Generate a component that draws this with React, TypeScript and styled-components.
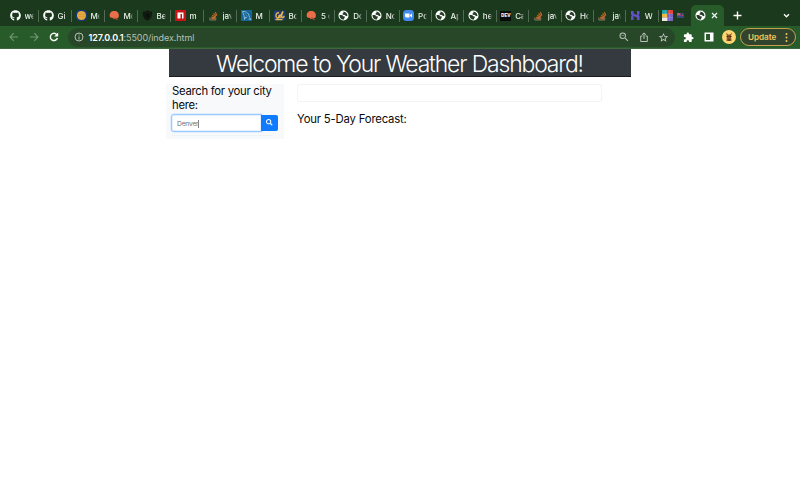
import React from "react";
import styled, { createGlobalStyle } from "styled-components";
import { FaGithub, FaSearch } from "react-icons/fa";
import { MdExtension, MdStarBorder, MdZoomOut } from "react-icons/md";

const GlobalStyle = createGlobalStyle`
  * { box-sizing: border-box; }
  html, body, #root { height: 100%; }
  body { margin: 0; background: #fff; overflow: hidden; font-family: Inter, "Liberation Sans", sans-serif; color: #212529; }
  svg { display: block; flex: none; }
`;

const Browser = styled.div`
  height: 500px;
  width: 800px;
  display: flex;
  flex-direction: column;
`;

const TabStrip = styled.div`
  height: 26px;
  flex: none;
  display: flex;
  align-items: flex-end;
  background: #1b391c;
  padding-left: 6px;
`;

const Tab = styled.div<{ $wide: boolean }>`
  width: ${({ $wide }) => ($wide ? "33px" : "32.4px")};
  flex: none;
  height: 21px;
  display: flex;
  align-items: center;
  padding-left: 3.5px;
  gap: 4px;
`;

const TabIcon = styled.span`
  width: 11px;
  height: 11px;
  flex: none;
  display: flex;
  align-items: center;
  justify-content: center;
`;

const TabTitle = styled.span`
  width: 10px;
  overflow: hidden;
  white-space: nowrap;
  font-size: 8px;
  line-height: 12px;
  font-weight: 500;
  color: #e9efe9;
  mask-image: linear-gradient(90deg, #000 70%, transparent);
`;

const Divider = styled.i`
  width: 1px;
  height: 12px;
  margin-left: auto;
  background: #536b54;
`;

const ActiveTab = styled.div`
  width: 33px;
  height: 21px;
  display: flex;
  align-items: center;
  padding-left: 4.5px;
  gap: 3.5px;
  margin-left: -0.4px;
  background: #285b2a;
  border-radius: 5px 5px 0 0;
`;

const StripEnd = styled.div`
  flex: 1;
  height: 21px;
  display: flex;
  align-items: center;
  justify-content: space-between;
  padding: 0 9px 0 8px;
`;

const Toolbar = styled.div`
  height: 23px;
  flex: none;
  display: flex;
  align-items: center;
  background: #285b2a;
  border-bottom: 1px solid #3e673e;
  padding: 0 4px 0 8px;
`;

const NavButtons = styled.div`
  width: 60px;
  display: flex;
  align-items: center;
  gap: 8px;
`;

const AddressBar = styled.div`
  width: 607px;
  height: 19px;
  flex: none;
  border-radius: 10px;
  background: #284729;
  display: flex;
  align-items: center;
  padding: 0 5px 0 6px;
`;

const Address = styled.span`
  margin-left: 4.5px;
  flex: 1;
  font-size: 9px;
  letter-spacing: -0.08px;
  color: #b4c1b4;
  b { color: #fff; font-weight: 600; letter-spacing: -0.1px; }
`;

const AddressActions = styled.div`
  display: flex;
  align-items: center;
  gap: 9px;
  margin-right: 1px;
`;

const ToolbarActions = styled.div`
  flex: 1;
  display: flex;
  align-items: center;
  padding-left: 8px;
`;

const PanelButton = styled.span`
  margin-left: 10px;
`;

const Avatar = styled.span`
  margin-left: 8px;
`;

const UpdateButton = styled.span`
  margin-left: auto;
  width: 56px;
  height: 18px;
  border: 1.5px solid #c5a14b;
  border-radius: 9px;
  background: #31432c;
  display: flex;
  align-items: center;
  justify-content: space-between;
  padding: 0 7px 0 7px;
  color: #f0c75b;
  font-size: 8.1px;
  font-weight: 600;
`;

const Page = styled.main`
  flex: 1;
  width: 462px;
  margin-left: 169px;
`;

const Banner = styled.h1`
  margin: 0;
  height: 28px;
  background: #343a40;
  border-bottom: 1px solid #171b20;
  color: #fff;
  font-size: 22.9px;
  line-height: 30px;
  font-weight: 300;
  letter-spacing: -1.13px;
  padding-right: 1px;
  text-align: center;
  white-space: nowrap;
`;

const Columns = styled.div`
  display: flex;
  align-items: flex-start;
  margin: 7px 0 0 -3px;
`;

const SearchPanel = styled.section`
  width: 118px;
  height: 55px;
  background: #f8f9fa;
  padding: 0 6px;
`;

const Heading = styled.h2<{ $tight?: boolean }>`
  margin: 0;
  font-size: 11.3px;
  line-height: 14px;
  font-weight: 400;
  color: #08090a;
  letter-spacing: ${({ $tight }) => ($tight ? "-0.28px" : "-0.17px")};
  white-space: nowrap;
`;

const SearchForm = styled.div`
  display: flex;
  align-items: center;
  margin: 2px 0 0 -1px;
`;

const SearchField = styled.div`
  width: 91px;
  height: 18px;
  background: #fff;
  border: 1px solid #9dcaff;
  box-shadow: inset 0 0 0 0.5px #c7e1ff, 0 0 0 0.5px #c7e1ff;
  border-radius: 3px 0 0 3px;
  padding: 1px 0 0 5px;
  display: flex;
  align-items: center;
  color: #6b7177;
  font-size: 6.7px;
  letter-spacing: -0.2px;
`;

const Caret = styled.i`
  width: 1px;
  height: 8px;
  background: #858a90;
`;

const SearchButton = styled.button`
  width: 17px;
  height: 16px;
  border: 0;
  padding: 0 0 1px;
  margin-left: -0.5px;
  border-radius: 0 2px 2px 0;
  background: #107bff;
  color: #fff;
  display: flex;
  align-items: center;
  justify-content: center;
`;

const ResultDivider = styled.i`
  display: block;
  width: 101px;
  height: 1px;
  margin-top: 3px;
  background: #f1f2f3;
`;

const Results = styled.section`
  margin-left: 13px;
  width: 305px;
`;

const CurrentWeather = styled.div`
  height: 18px;
  margin-bottom: 10px;
  border: 1px solid #f4f4f4;
  border-radius: 2px;
`;

const Globe = () => (
  <svg width="11" height="11" viewBox="0 0 22 22">
    <circle cx="11" cy="11" r="10" fill="#fff" />
    <path d="M3 10c3-.5 7 0 7.500 2.500l3 .5c1 2-1 2-1 4l-1.500 2.500C6 19 2.500 15 3 10Z" fill="#243e25" />
    <path d="M10.500 3c5 .5 8 3.500 8.500 8.500l-3 1-2-2.500-4-.5c-1.500-1-1.500-2.500 0-3s1-1 .5-3.500Z" fill="#243e25" />
  </svg>
);
const Github = () => <FaGithub size={11} color="#fff" />;
const Mozilla = () => (
  <svg width="11" height="11" viewBox="0 0 22 22"><rect width="22" height="22" rx="8" fill="#173c79" /><circle cx="11" cy="11" r="9" fill="#e5a93f" /><path d="M5 9h12M5 13h12" stroke="#ca9236" strokeWidth="1" /></svg>
);
const Helmet = () => (
  <svg width="11" height="11" viewBox="0 0 22 22"><path d="M1.500 13C0 5 6 1 12 2c7 1 9 7 7 13l-4 2-6 1-1-2-5-1Z" fill="#eb6e4b" /><path d="m12 14 7 6-5-1-4-3Z" fill="#b94f36" /></svg>
);
const Shield = () => (
  <svg width="11" height="11" viewBox="0 0 22 22"><path d="M2 3c5 1 6-1 9-2 3 1 5 3 9 2 0 10-1 15-9 18C3 18 1 13 2 3Z" fill="#101810" /><path d="M6 6h10l-1 7-4 4-4-4Z" fill="#071009" stroke="#1c281c" /></svg>
);
const Npm = () => (
  <svg width="11" height="11" viewBox="0 0 22 22"><path d="M0 0h22v22H0Z" fill="#ca1414" /><path d="M5 5h12v12h-3V8h-3v9H5Z" fill="#fff" /></svg>
);
const Stack = () => (
  <svg width="9" height="10" viewBox="0 0 20 22"><path d="M2 14v6h13v-6" fill="none" stroke="#8e8276" strokeWidth="2" /><path d="m5 17 8 .5M5 13.500l8.500 1.500M7 9.500l8 4M10 5l6 6.500M14 2l3.500 8" fill="none" stroke="#c2662b" strokeWidth="2.600" /></svg>
);
const Dolphin = () => (
  <svg width="11" height="11" viewBox="0 0 22 22"><path d="M0 0h22v22H0Z" fill="#14669a" /><path d="M3 3c9-1 13 5 14 12l3 4-5-1M3 3l3 8 1 8 2-5 3 2" fill="none" stroke="#b9d6e5" strokeWidth="1.400" /><path d="m7 6 7 8" stroke="#6da2c3" /></svg>
);
const Cal = () => (
  <svg width="11" height="11" viewBox="0 0 22 22"><path d="M0 1h22v20H0Z" fill="#213b73" /><path d="M10 6C4 3 1 16 8 16l5-6c-5 0-4 7 1 4l4-11c-4 4-4 13 0 12l3-3M3 19h14" fill="none" stroke="#e5b453" strokeWidth="2.800" /></svg>
);
const Camera = () => (
  <svg width="11" height="11" viewBox="0 0 22 22"><rect width="22" height="22" rx="7" fill="#438bf0" /><path d="M4 7h9v8H6l-2-2ZM14 10l4-3v8l-4-3Z" fill="#fff" /></svg>
);
const DevBadge = styled.span`
  width: 11px;
  height: 10px;
  flex: none;
  background: #090b09;
  color: #fff;
  font: 700 5.6px/10px "Liberation Mono", monospace;
  letter-spacing: -0.2px;
  text-align: center;
`;
const Dev = () => <DevBadge>DEV</DevBadge>;
const Hash = () => (
  <svg width="11" height="11" viewBox="0 0 22 22"><path d="M2 2h5v5l7 3V2h5v6l-2 2 2 2v8h-5v-5l-7-3v8H2v-7l2-2-2-2Z" fill="#6450c8" /></svg>
);
const Grid = () => (
  <svg width="11" height="11" viewBox="0 0 22 22"><path d="M0 0h11v10H0Z" fill="#20a5a5" /><path d="M11 0h11v10H11Z" fill="#db433e" /><path d="M0 8h11v7H0Z" fill="#f1b53e" /><path d="M11 8h11v14H11Z" fill="#7964c4" /><path d="M0 15h11v7H0Z" fill="#eee8e4" /><path d="M7 0v22M15 0v22M0 7h22M0 15h22" stroke="#fff" strokeOpacity=".25" /></svg>
);
const Flag = () => (
  <svg width="7" height="5" viewBox="0 0 14 10"><path d="M0 0h14v10H0Z" fill="#34477e" /><path d="m0 0 7 5M7 0 0 5M3.500 0v5M0 2.500h7" stroke="#e2626b" strokeWidth="1.500" /><circle cx="11" cy="5" r="1.500" fill="#c54a61" /></svg>
);

const tabs: { Icon: React.ComponentType; title: React.ReactNode }[] = [
  { Icon: Github, title: "we" }, { Icon: Github, title: "Gi" },
  { Icon: Mozilla, title: "Mo" }, { Icon: Helmet, title: "Mo" },
  { Icon: Shield, title: "Be" }, { Icon: Npm, title: "m" },
  { Icon: Stack, title: "jav" }, { Icon: Dolphin, title: "M" },
  { Icon: Cal, title: "Bo" }, { Icon: Helmet, title: "5 d" },
  { Icon: Globe, title: "Do" }, { Icon: Globe, title: "No" },
  { Icon: Camera, title: "Po" }, { Icon: Globe, title: "Ap" },
  { Icon: Globe, title: "he" }, { Icon: Dev, title: "Ca" },
  { Icon: Stack, title: "jav" }, { Icon: Globe, title: "Ho" },
  { Icon: Stack, title: "jav" }, { Icon: Hash, title: "W" },
  { Icon: Grid, title: <Flag /> },
];

const Arrow = ({ forward = false }: { forward?: boolean }) => (
  <svg width="12" height="12" viewBox="0 0 12 12" fill="none" stroke="#759575" strokeWidth="1.1">
    {forward ? <path d="M2 6h8M6.3 2.2 10 6 6.3 9.8" /> : <path d="M10 6H2M5.7 2.2 2 6l3.7 3.8" />}
  </svg>
);

export default function App() {
  return (
    <>
      <GlobalStyle />
      <Browser>
        <TabStrip>
          {tabs.map(({ Icon, title }, i) => (
            <Tab key={i} $wide={i < 8}>
              <TabIcon><Icon /></TabIcon>
              <TabTitle>{title}</TabTitle>
              {i < tabs.length - 1 && <Divider />}
            </Tab>
          ))}
          <ActiveTab>
            <Globe />
            <svg width="9" height="9" viewBox="0 0 9 9" stroke="#f1f5f1" strokeWidth="1.2"><path d="m2 2 5 5M7 2 2 7" /></svg>
          </ActiveTab>
          <StripEnd>
            <svg width="11" height="11" viewBox="0 0 11 11" stroke="#fff" strokeWidth="1.4"><path d="M5.5 1.5v8M1.5 5.5h8" /></svg>
            <svg width="9" height="9" viewBox="0 0 9 9" fill="none" stroke="#fff" strokeWidth="1.3"><path d="m2 3.2 2.5 2.6L7 3.2" /></svg>
          </StripEnd>
        </TabStrip>
        <Toolbar>
          <NavButtons>
            <Arrow />
            <Arrow forward />
            <svg width="12" height="12" viewBox="0 0 12 12"><path d="M9.4 7A3.6 3.6 0 1 1 8.8 3.700" fill="none" stroke="#fff" strokeWidth="1.4" /><path d="M10.200 1.500v4H6.200Z" fill="#fff" /></svg>
          </NavButtons>
          <AddressBar>
            <svg width="10" height="10" viewBox="0 0 10 10" fill="none" stroke="#b4c1b4"><circle cx="5" cy="5" r="4" /><path d="M5 4.5v3M5 2.5v1" /></svg>
            <Address><b>127.0.0.1</b>:5500/index.html</Address>
            <AddressActions>
              <MdZoomOut size={12} color="#b7c3b7" />
              <svg width="10" height="11" viewBox="0 0 10 11" fill="none" stroke="#b7c3b7"><path d="M3.5 4H1.7v5.5h6.6V4H6.5M5 7V1M3 2.8 5 .9l2 1.9" /></svg>
              <MdStarBorder size={11} color="#c3cdc3" />
            </AddressActions>
          </AddressBar>
          <ToolbarActions>
            <MdExtension size={11} color="#fff" />
            <PanelButton><svg width="10" height="10" viewBox="0 0 10 10"><path d="M.5.5h9v9h-9Z" fill="#fff" /><path d="M2 2h4v6H2Z" fill="#285b2a" /></svg></PanelButton>
            <Avatar><svg width="14" height="14" viewBox="0 0 28 28"><circle cx="14" cy="14" r="14" fill="#ffd571" /><path d="m8 5 4 4h4l4-4-2 7 1 10H9l1-10Z" fill="#8a5628" /><path d="M9 13h4M15 13h4M12 20h5" stroke="#38291b" strokeWidth="2" /></svg></Avatar>
            <UpdateButton>
              Update
              <svg width="3" height="11" viewBox="0 0 3 11" fill="#f0c75b"><circle cx="1.5" cy="2" r="1" /><circle cx="1.5" cy="5.5" r="1" /><circle cx="1.5" cy="9" r="1" /></svg>
            </UpdateButton>
          </ToolbarActions>
        </Toolbar>
        <Page>
          <Banner>Welcome to Your Weather Dashboard!</Banner>
          <Columns>
            <SearchPanel>
              <Heading $tight>Search for your city<br />here:</Heading>
              <SearchForm>
                <SearchField>Denver<Caret /></SearchField>
                <SearchButton aria-label="Search"><FaSearch size={6.5} /></SearchButton>
              </SearchForm>
              <ResultDivider />
            </SearchPanel>
            <Results>
              <CurrentWeather />
              <Heading>Your 5-Day Forecast:</Heading>
            </Results>
          </Columns>
        </Page>
      </Browser>
    </>
  );
}
